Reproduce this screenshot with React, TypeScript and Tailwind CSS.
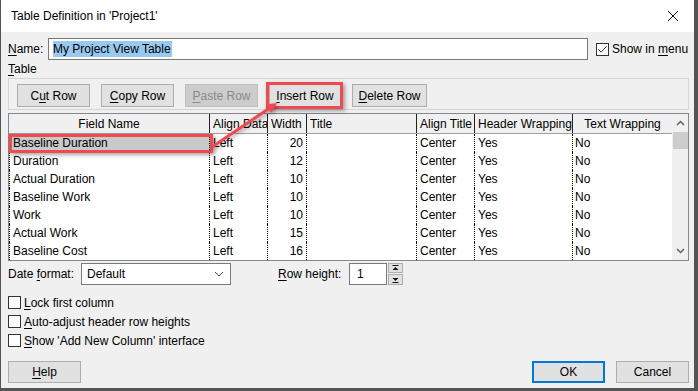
import React from "react";

const ROWS: [string, string, string][] = [
  ["Baseline Duration", "Left", "20"],
  ["Duration", "Left", "12"],
  ["Actual Duration", "Left", "10"],
  ["Baseline Work", "Left", "10"],
  ["Work", "Left", "10"],
  ["Actual Work", "Left", "15"],
  ["Baseline Cost", "Left", "16"],
];

function U({ children }: { children: React.ReactNode }) {
  return <span className="underline decoration-1 underline-offset-[2px]">{children}</span>;
}

function Btn({
  children,
  w = "w-[73px]",
  disabled = false,
}: {
  children: React.ReactNode;
  w?: string;
  disabled?: boolean;
}) {
  return (
    <div
      className={`${w} h-[23px] flex items-center justify-center border border-[#adadad] ${
        disabled ? "bg-[#cccccc] text-[#8a8a8a] border-[#bfbfbf]" : "bg-[#e1e1e1] text-black"
      }`}
    >
      {children}
    </div>
  );
}

function Check({ checked = false }: { checked?: boolean }) {
  return (
    <div className="w-[13px] h-[13px] border border-[#333333] bg-white flex items-center justify-center shrink-0">
      {checked && (
        <svg width="11" height="11" viewBox="0 0 11 11">
          <path d="M1.5 5.5 L4.2 8.2 L9.5 2.2" fill="none" stroke="#333" strokeWidth="1" />
        </svg>
      )}
    </div>
  );
}

const COLS = [
  { label: "Field Name", w: "w-[201px]", center: true },
  { label: "Align Data", w: "w-[58px]" },
  { label: "Width", w: "w-[39px]" },
  { label: "Title", w: "w-[110px]" },
  { label: "Align Title", w: "w-[58px]" },
  { label: "Header Wrapping", w: "w-[98px]" },
  { label: "Text Wrapping", w: "w-[99px]", center: true, last: true },
];

export default function App() {
  return (
    <div className="relative w-[698px] h-[391px] overflow-hidden bg-[#545454] font-['Liberation_Sans',Arial,sans-serif] text-[12px] text-black">
      <div className="ml-[1px] w-[693px] h-[388px] bg-[#f0f0f0] flex flex-col">
        {/* title bar */}
        <div className="h-[32px] bg-white flex items-center justify-between pl-[10px] pr-[15px]">
          <span>Table Definition in 'Project1'</span>
          <svg width="12" height="12" viewBox="0 0 12 12">
            <path d="M1 1 L11 11 M11 1 L1 11" stroke="#111" strokeWidth="1" />
          </svg>
        </div>

        <div className="pl-[7px] pr-[5px] flex flex-col">
          {/* name row */}
          <div className="mt-[6px] h-[22px] flex items-center">
            <span className="w-[40px]">
              <U>N</U>ame:
            </span>
            <div className="w-[540px] h-[22px] border border-[#7a7a7a] bg-white flex items-center pl-[4px]">
              <span className="bg-[#99c9ef] leading-[16px] pr-[1px]">My Project View Table</span>
            </div>
            <div className="ml-[8px]">
              <Check checked />
            </div>
            <span className="ml-[3px]">
              Show in <U>m</U>enu
            </span>
          </div>

          <div className="h-[18px] leading-[18px]">
            <U>T</U>able
          </div>

          {/* button group */}
          <div className="h-[32px] border border-[#d5d5d5] flex gap-[11px] pl-[8px] pt-[5px]">
            <Btn>
              C<U>u</U>t Row
            </Btn>
            <Btn>
              <U>C</U>opy Row
            </Btn>
            <Btn disabled>
              <U>P</U>aste Row
            </Btn>
            <Btn w="w-[72px]">
              <U>I</U>nsert Row
            </Btn>
            <Btn w="w-[75px]">
              <U>D</U>elete Row
            </Btn>
          </div>

          {/* table */}
          <div className="mt-[3px] h-[148px] w-[681px] border border-[#828790] bg-white flex">
            <div className="flex flex-col">
              <div className="h-[20px] flex border-b border-[#a0a0a0] bg-[#f0f0f0]">
                {COLS.map((c) => (
                  <div
                    key={c.label}
                    className={`${c.w} h-full flex items-center whitespace-nowrap overflow-hidden ${
                      c.center ? "justify-center" : "pl-[3px]"
                    } ${c.last ? "" : "border-r border-[#222222]"}`}
                  >
                    {c.label}
                  </div>
                ))}
              </div>
              {ROWS.map((r, i) => (
                <div key={i} className="h-[18px] flex">
                  <div
                    className={`w-[201px] h-full flex items-center pl-[3px] border-r border-l border-dotted border-black ${
                      i === 0 ? "bg-[#c9c9c9]" : ""
                    }`}
                  >
                    {r[0]}
                  </div>
                  <div className="w-[58px] h-full flex items-center pl-[3px] border-r border-dotted border-black">
                    {r[1]}
                  </div>
                  <div className="w-[39px] h-full flex items-center justify-end pr-[3px] border-r border-dotted border-black">
                    {r[2]}
                  </div>
                  <div className="w-[110px] h-full border-r border-dotted border-black" />
                  <div className="w-[58px] h-full flex items-center pl-[3px] border-r border-dotted border-black">
                    Center
                  </div>
                  <div className="w-[98px] h-full flex items-center pl-[3px] border-r border-dotted border-black">
                    Yes
                  </div>
                  <div className="w-[99px] h-full flex items-center pl-[2px]">No</div>
                </div>
              ))}
            </div>
            {/* scrollbar */}
            <div className="w-[16px] h-full bg-[#f0f0f0] flex flex-col items-center">
              <div className="h-[18px] flex items-center justify-center">
                <svg width="9" height="6" viewBox="0 0 9 6">
                  <path d="M1 5 L4.5 1.5 L8 5" fill="none" stroke="#606060" strokeWidth="1.5" />
                </svg>
              </div>
              <div className="w-[15px] h-[17px] bg-[#cdcdcd]" />
              <div className="flex-1" />
              <div className="h-[18px] flex items-center justify-center">
                <svg width="9" height="6" viewBox="0 0 9 6">
                  <path d="M1 1 L4.5 4.5 L8 1" fill="none" stroke="#606060" strokeWidth="1.5" />
                </svg>
              </div>
            </div>
          </div>

          {/* date format / row height */}
          <div className="mt-[2px] h-[22px] flex items-center">
            <span className="w-[73px]">
              Date <U>f</U>ormat:
            </span>
            <div className="w-[150px] h-[22px] border border-[#7a7a7a] bg-white flex items-center justify-between pl-[5px] pr-[6px]">
              <span>Default</span>
              <svg width="10" height="6" viewBox="0 0 10 6">
                <path d="M1 1 L5 5 L9 1" fill="none" stroke="#444" strokeWidth="1" />
              </svg>
            </div>
            <span className="ml-[47px] w-[71px]">
              <U>R</U>ow height:
            </span>
            <div className="w-[38px] h-[22px] border border-[#7a7a7a] bg-white flex items-center pl-[7px]">1</div>
            <div className="ml-[1px] w-[15px] h-[22px] flex flex-col gap-[1px]">
              <div className="h-[10px] bg-[#e1e1e1] border border-[#adadad] flex items-center justify-center">
                <svg width="7" height="6" viewBox="0 0 7 6">
                  <path d="M0.5 0.5 H6.5" stroke="#111" />
                  <path d="M3.5 2 L6.5 5 H0.5 Z" fill="#111" />
                </svg>
              </div>
              <div className="h-[11px] bg-[#e1e1e1] border border-[#adadad] flex items-center justify-center">
                <svg width="7" height="6" viewBox="0 0 7 6">
                  <path d="M0.5 1 H6.5 L3.5 4 Z" fill="#111" />
                  <path d="M0.5 5.5 H6.5" stroke="#111" />
                </svg>
              </div>
            </div>
          </div>

          {/* checkboxes */}
          <div className="mt-[8px] flex flex-col">
            <div className="h-[19px] flex items-center gap-[3px]">
              <Check />
              <span>
                <U>L</U>ock first column
              </span>
            </div>
            <div className="h-[19px] flex items-center gap-[3px]">
              <Check />
              <span>
                <U>A</U>uto-adjust header row heights
              </span>
            </div>
            <div className="h-[19px] flex items-center gap-[3px]">
              <Check />
              <span>
                <U>S</U>how 'Add New Column' interface
              </span>
            </div>
          </div>

          {/* footer buttons */}
          <div className="mt-[11px] h-[22px] flex">
            <div className="w-[73px] h-[22px] border border-[#adadad] bg-[#e1e1e1] flex items-center justify-center">
              <U>H</U>elp
            </div>
            <div className="flex-1" />
            <div className="w-[73px] h-[22px] border-2 border-[#0078d7] bg-[#e1e1e1] flex items-center justify-center">
              OK
            </div>
            <div className="ml-[11px] w-[73px] h-[22px] border border-[#adadad] bg-[#e1e1e1] flex items-center justify-center">
              Cancel
            </div>
          </div>
        </div>
      </div>

      {/* annotation overlays */}
      <div className="absolute left-[266px] top-[82px] w-[77px] h-[27px] border-[3px] border-[#ee4a50] shadow-[2px_2px_4px_rgba(0,0,0,0.35)]" />
      <div className="absolute left-[9px] top-[134px] w-[204px] h-[19px] border-[3px] border-[#ee4a50] shadow-[2px_2px_4px_rgba(0,0,0,0.35)]" />
      <svg
        className="absolute left-0 top-0 pointer-events-none"
        width="698"
        height="391"
        style={{ filter: "drop-shadow(1px 2px 2px rgba(0,0,0,0.35))" }}
      >
        <line x1="212" y1="147" x2="269" y2="108.5" stroke="#ee4a50" strokeWidth="3" />
        <polygon points="277,103 271.5,112.7 265.9,104.4" fill="#ee4a50" />
      </svg>
    </div>
  );
}
